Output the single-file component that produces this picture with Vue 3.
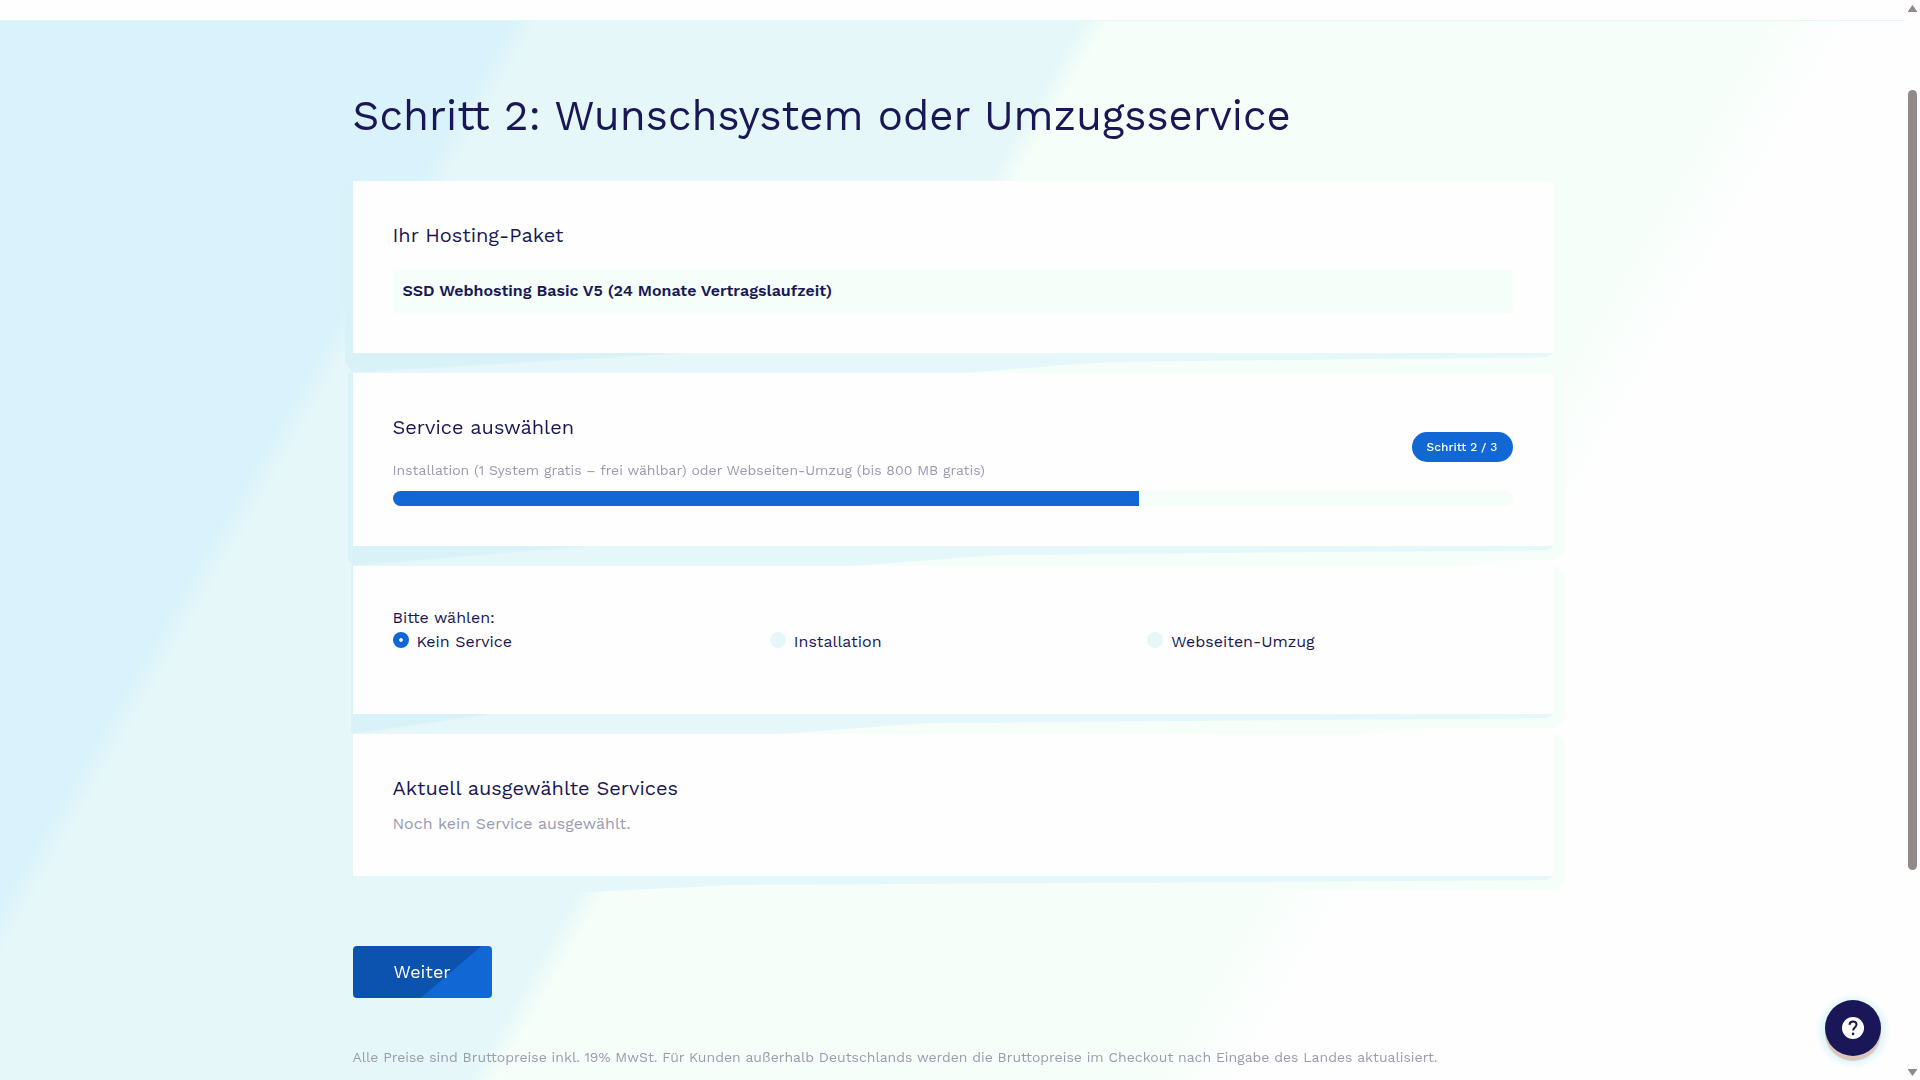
<template>
  <div class="layout">
    <div class="page">
      <header class="topbar"></header>
      <main class="content">
        <h1>Schritt 2: Wunschsystem oder Umzugsservice</h1>

        <section class="card card-paket">
          <h2>Ihr Hosting-Paket</h2>
          <div class="paket">SSD Webhosting Basic V5 (24 Monate Vertragslaufzeit)</div>
        </section>

        <section class="card card-service">
          <div class="card-head">
            <div>
              <h2>Service auswählen</h2>
              <p class="sub">Installation (1 System gratis – frei wählbar) oder Webseiten-Umzug (bis 800 MB gratis)</p>
            </div>
            <span class="badge">Schritt {{ step }} / {{ steps }}</span>
          </div>
          <div class="progress">
            <div class="progress-bar" :style="{ width: progress + '%' }"></div>
          </div>
        </section>

        <section class="card card-options">
          <div class="label">Bitte wählen:</div>
          <div class="options">
            <label v-for="option in options" :key="option.value" class="option">
              <input v-model="selected" type="radio" name="service" :value="option.value" />
              <span>{{ option.label }}</span>
            </label>
          </div>
        </section>

        <section class="card card-current">
          <h2>Aktuell ausgewählte Services</h2>
          <p class="empty">Noch kein Service ausgewählt.</p>
        </section>

        <button class="next" type="button">Weiter</button>
        <p class="note">Alle Preise sind Bruttopreise inkl. 19% MwSt. Für Kunden außerhalb Deutschlands werden die Bruttopreise im Checkout nach Eingabe des Landes aktualisiert.</p>
      </main>
    </div>

    <div class="scrollbar">
      <svg width="9" height="7" viewBox="0 0 9 7"><path d="M4.5 0 9 6.2V7H0v-.8z" fill="#918a89" /></svg>
      <div class="thumb"></div>
      <svg width="9" height="7" viewBox="0 0 9 7"><path d="M4.5 7 9 .8V0H0v.8z" fill="#918a89" /></svg>
    </div>

    <button class="help" type="button" aria-label="Hilfe">
      <svg width="22" height="22" viewBox="0 0 22 22">
        <circle cx="11" cy="11" r="11" fill="#fefefe" />
        <path d="M7.5 7.9C7.6 5.7 9 4.4 11 4.4c2.1 0 3.5 1.3 3.5 3.2 0 2.9-3.4 3-3.4 6" fill="none" stroke="#191757" stroke-width="2" />
        <circle cx="11.1" cy="16.9" r="1.3" fill="#191757" />
      </svg>
    </button>
  </div>
</template>

<script setup>
import { ref, computed } from 'vue'

const step = ref(2)
const steps = 3
const progress = computed(() => (step.value / steps) * 100)

const selected = ref('none')
const options = [
  { value: 'none', label: 'Kein Service' },
  { value: 'install', label: 'Installation' },
  { value: 'move', label: 'Webseiten-Umzug' }
]
</script>

<style>
body {
  margin: 0;
  overflow: hidden;
}
</style>

<style scoped>
.layout {
  position: relative;
  display: flex;
  width: 100%;
  height: 1080px;
  overflow: hidden;
  color: #191757;
  font-family: 'Work Sans', 'Open Sans', sans-serif;
  background: #fefefe;
}

.page {
  flex: 1;
  isolation: isolate;
  background: linear-gradient(
    120deg,
    #d9f2fb 450px,
    #e5f7f8 478px,
    #e5f7f8 945px,
    #f5fef9 971px,
    #f5fef9 1520px,
    #fefefe 1620px
  );
}

.topbar {
  height: 21px;
  background: #fefefe;
  border-bottom: 1px solid #e3f7fa;
  box-sizing: border-box;
}

.content {
  width: 1200px;
  margin: 0 auto;
  padding-top: 71px;
}

h1,
h2,
p {
  margin: 0;
  font-weight: 400;
  white-space: nowrap;
}

h1 {
  margin-bottom: 41px;
  font-size: 42px;
  line-height: 48px;
}

h2 {
  font-size: 20px;
  line-height: 28px;
}

.card {
  position: relative;
  box-sizing: border-box;
  padding: 40px;
  background: #fefefe;
}

.card + .card {
  margin-top: 20px;
}

/* Shadow layers: only darken the page where it is lighter than the tint */
.card::before,
.card::after {
  content: '';
  position: absolute;
  z-index: -1;
  mix-blend-mode: darken;
}

.card::before {
  inset: 0 -12px -14px;
  background: #f5fef9;
  border-radius: 14px;
}

.card::after {
  inset: 0 0 -20px -8px;
  background:
    linear-gradient(#d9f2fb, #d9f2fb) calc(8px - var(--strip)) 0 / var(--strip) calc(100% - 14px) no-repeat,
    linear-gradient(to bottom right, #d9f2fb 48%, transparent 52%) calc(8px - var(--strip)) 100% / var(--tint) 20px no-repeat,
    #e5f7f8;
  clip-path: polygon(
    0 0,
    100% 0,
    100% calc(100% - 19px),
    calc(100% - 6px) calc(100% - 16px),
    calc(var(--reach) + 12%) calc(100% - 11px),
    var(--reach) calc(100% - var(--lift)),
    8px calc(100% - var(--lift)),
    0 calc(100% - 12px)
  );
}

.card-paket {
  --strip: 8px;
  --tint: 340px;
  --reach: 51%;
  --lift: 0px;
}

.card-service {
  --strip: 5px;
  --tint: 240px;
  --reach: 42%;
  --lift: 0px;
}

.card-options {
  --strip: 2px;
  --tint: 140px;
  --reach: 36%;
  --lift: 0px;
}

.card-current {
  --strip: 0px;
  --tint: 0px;
  --reach: 20%;
  --lift: 4px;
}

.paket {
  height: 44px;
  margin-top: 20px;
  padding: 0 10px;
  font-size: 16px;
  font-weight: 600;
  line-height: 43px;
  background: #f5fef9;
}

.card-head {
  display: flex;
  align-items: center;
  justify-content: space-between;
}

.sub {
  margin-top: 19px;
  font-size: 14px;
  line-height: 20px;
  color: #9b9bb0;
}

.badge {
  width: 101px;
  font-size: 12px;
  font-weight: 500;
  line-height: 30px;
  text-align: center;
  color: #fefefe;
  background: #1168d4;
  border-radius: 15px;
}

.progress {
  height: 15px;
  margin-top: 11px;
  overflow: hidden;
  background: #f5fef9;
  border-radius: 8px;
}

.progress-bar {
  height: 100%;
  background: #1168d4;
}

.label {
  font-size: 16px;
  line-height: 23px;
}

.options {
  display: grid;
  grid-template-columns: repeat(3, 1fr);
  gap: 12px;
  margin-bottom: 20px;
}

.option {
  display: flex;
  gap: 8px;
  font-size: 16px;
  line-height: 25px;
}

.option input {
  width: 16px;
  height: 16px;
  margin: 3px 0 0;
  appearance: none;
  background: #e5f7f8;
  border-radius: 50%;
}

.option input:checked {
  background: radial-gradient(circle, #fefefe 1.4px, #1168d4 2.3px);
}

.empty {
  margin-top: 9px;
  font-size: 16px;
  line-height: 25px;
  color: #9b9bb0;
}

.next {
  display: block;
  width: 139px;
  height: 52px;
  margin-top: 70px;
  padding: 0 0 2px 41px;
  border: 0;
  border-radius: 4px;
  font-family: inherit;
  font-size: 18px;
  text-align: left;
  color: #fefefe;
  background: linear-gradient(139.5deg, #0b53ae 83px, #1168d4 84px);
}

.note {
  margin-top: 49px;
  font-size: 14px;
  line-height: 20px;
  color: #9b9bb0;
}

.scrollbar {
  display: flex;
  flex-direction: column;
  align-items: center;
  width: 15px;
  box-sizing: border-box;
  padding: 5px 0 4px;
  background: #fefefe;
}

.thumb {
  width: 9px;
  height: 780px;
  margin: 78px 0 auto;
  background: #918a89;
  border-radius: 5px;
}

.help {
  position: absolute;
  right: 39px;
  bottom: 24px;
  display: flex;
  align-items: center;
  justify-content: center;
  width: 56px;
  height: 56px;
  padding: 0;
  border: 0;
  border-radius: 50%;
  background: #191757;
  box-shadow: 0 5px 1px #dcc6bb, 0 3px 5px 6px #e3f6fa;
}
</style>
